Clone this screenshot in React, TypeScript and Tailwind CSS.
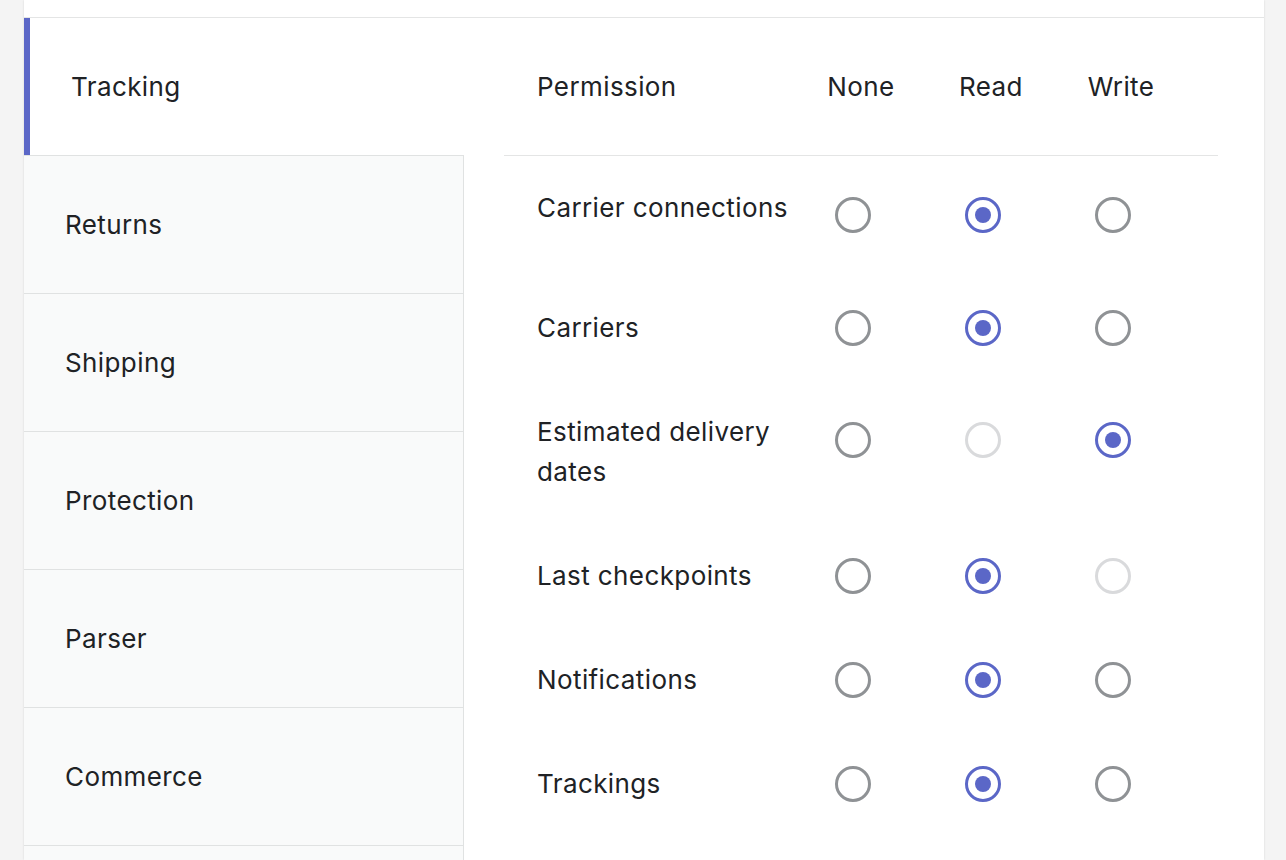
import React from "react";

type Level = "none" | "read" | "write";

interface Row {
  label: string;
  value: Level;
  disabled?: Level[];
  height: number;
  radioTop: number;
}

const tabs = ["Tracking", "Returns", "Shipping", "Protection", "Parser", "Commerce", ""];

const rows: Row[] = [
  { label: "Carrier connections", value: "read", height: 120, radioTop: 41 },
  { label: "Carriers", value: "read", height: 104, radioTop: 34 },
  { label: "Estimated delivery dates", value: "write", disabled: ["read"], height: 144, radioTop: 42 },
  { label: "Last checkpoints", value: "read", disabled: ["write"], height: 104, radioTop: 34 },
  { label: "Notifications", value: "read", height: 104, radioTop: 34 },
  { label: "Trackings", value: "read", height: 104, radioTop: 34 },
];

const levels: Level[] = ["none", "read", "write"];

function Radio({ checked, disabled }: { checked: boolean; disabled: boolean }) {
  if (checked) {
    return (
      <span className="flex h-[36px] w-[36px] items-center justify-center rounded-full border-[3px] border-[#5b67c7]">
        <span className="h-[16px] w-[16px] rounded-full bg-[#5b67c7]" />
      </span>
    );
  }
  return (
    <span
      className={
        disabled
          ? "block h-[36px] w-[36px] rounded-full border-[3px] border-[#d9dadc]"
          : "block h-[36px] w-[36px] rounded-full border-[3px] border-[#8f9295]"
      }
    />
  );
}

export default function App() {
  return (
    <div
      className="min-h-screen bg-[#f4f4f4] pl-[24px] text-[#202225]"
      style={{ fontFamily: "Inter, 'Noto Sans', sans-serif" }}
    >
      <div className="h-[860px] w-[1240px] overflow-hidden bg-white text-[26px] tracking-[0.4px] shadow-[0_0_2px_rgba(0,0,0,0.12)]">
        <div className="h-[18px] border-b border-[#e4e5e5]" />
        <div className="flex">
          {/* Sidebar tabs */}
          <div className="w-[440px] shrink-0">
            {tabs.map((t, i) =>
              i === 0 ? (
                <div
                  key={i}
                  className="flex h-[137px] items-center border-l-[6px] border-[#5b67c7] pl-[41px]"
                >
                  {t}
                </div>
              ) : (
                <div
                  key={i}
                  className="flex h-[138px] items-center border-r border-t border-[#e0e2e2] bg-[#f9fafa] pl-[41px]"
                >
                  {t}
                </div>
              )
            )}
          </div>

          {/* Permission table */}
          <div className="w-[754px] pl-[40px]">
            <div className="grid h-[138px] grid-cols-[292px_130px_130px_130px] items-center border-b border-[#e4e5e5]">
              <div className="pl-[33px]">Permission</div>
              <div className="text-center">None</div>
              <div className="text-center">Read</div>
              <div className="text-center">Write</div>
            </div>
            {rows.map((r) => (
              <div
                key={r.label}
                className="grid grid-cols-[292px_130px_130px_130px] items-start"
                style={{ height: r.height }}
              >
                <div className="pl-[33px] pt-[32px] leading-[40px]">{r.label}</div>
                {levels.map((l) => (
                  <div
                    key={l}
                    className="flex justify-center pr-[16px]"
                    style={{ paddingTop: r.radioTop }}
                  >
                    <Radio checked={r.value === l} disabled={!!r.disabled?.includes(l)} />
                  </div>
                ))}
              </div>
            ))}
          </div>
        </div>
      </div>
    </div>
  );
}
